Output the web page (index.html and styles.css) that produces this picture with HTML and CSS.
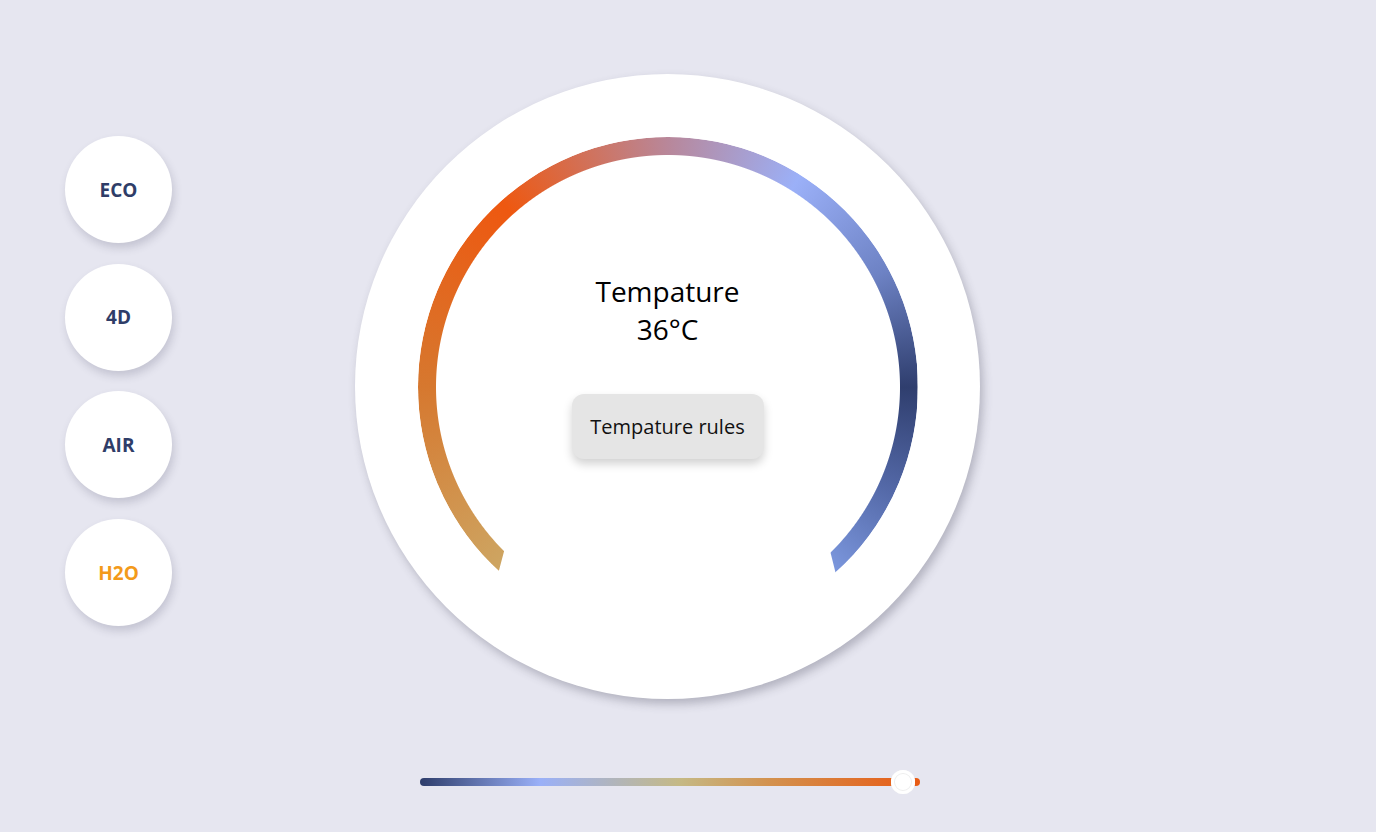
FILE: index.html
```html
<!DOCTYPE html>
<html lang="en">
<head>
    <meta charset="UTF-8">
    <meta name="viewport" content="width=device-width, initial-scale=1.0">
    <title>Thermostat</title>
    <link rel="stylesheet" href="styles.css">
</head>
<body>
    <div class="page">
        <div class="modes">
            <button class="mode">ECO</button>
            <button class="mode">4D</button>
            <button class="mode">AIR</button>
            <button class="mode active">H2O</button>
        </div>

        <div class="main">
            <div class="dial">
                <div class="arc"></div>
                <div class="readout">
                    <div class="label">Tempature<br>36°C</div>
                    <button class="rules">Tempature rules</button>
                </div>
            </div>

            <input class="slider" type="range" min="0" max="100" value="99">
        </div>
    </div>
</body>
</html>
```

FILE: styles.css
```css
body {
    margin: 0;
    background: #e6e6f0;
    font-family: "Open Sans", "Liberation Sans", sans-serif;
    color: #000;
}
.page {
    display: flex;
    height: 832px;
}
.modes {
    display: flex;
    flex-direction: column;
    gap: 20.7px;
    padding: 136px 0 0 65px;
}
.mode {
    width: 107px;
    height: 107px;
    border: none;
    border-radius: 50%;
    background: #fff;
    box-shadow: 2px 5px 9px rgba(60, 60, 90, 0.2);
    font-family: inherit;
    font-size: 19px;
    font-weight: 700;
    color: #2f3d68;
    cursor: pointer;
}
.mode.active {
    color: #f39a1b;
}
.main {
    display: flex;
    flex-direction: column;
    margin-left: 183px;
    padding-top: 74px;
}
.dial {
    width: 625px;
    height: 625px;
    border-radius: 50%;
    background: #fff;
    box-shadow: 3px 5px 10px rgba(60, 60, 80, 0.3);
    display: grid;
    place-items: center;
}
.arc,
.readout {
    grid-area: 1 / 1;
}
.arc {
    width: 500px;
    height: 500px;
    border-radius: 50%;
    background: conic-gradient(
        #b8879a 0deg,
        #9bb0f8 32deg,
        #6d82c4 62deg,
        #2f3e6e 90deg,
        #5469a8 115deg,
        #7f9be2 140deg,
        #cda865 220deg,
        #d6782f 270deg,
        #ee5810 318deg,
        #b8879a 360deg
    );
    -webkit-mask: radial-gradient(circle, transparent 231.5px, #000 232.5px);
    mask: radial-gradient(circle, transparent 231.5px, #000 232.5px);
    clip-path: polygon(0 0, 500px 0, 500px 500px, 434px 500px, 399px 360px, 101px 360px, 64px 500px, 0 500px);
}
.readout {
    align-self: start;
    margin-top: 198px;
    display: flex;
    flex-direction: column;
    align-items: center;
}
.label {
    font-size: 28px;
    line-height: 38px;
    text-align: center;
}
.rules {
    margin-top: 46px;
    width: 192px;
    height: 65px;
    border: none;
    border-radius: 12px;
    background: #e5e5e5;
    box-shadow: 0 5px 10px rgba(0, 0, 0, 0.18);
    font-family: inherit;
    font-size: 20px;
    color: #111;
    cursor: pointer;
}
.slider {
    -webkit-appearance: none;
    appearance: none;
    width: 500px;
    height: 24px;
    margin: 71px 0 0 65px;
    padding: 0;
    background: transparent;
}
.slider::-webkit-slider-runnable-track {
    height: 8px;
    border-radius: 4px;
    background: linear-gradient(to right, #2e3d6b 0%, #9ab0f8 24%, #c5b985 52%, #d3914e 70%, #e85a14 100%);
}
.slider::-webkit-slider-thumb {
    -webkit-appearance: none;
    width: 24px;
    height: 24px;
    margin-top: -8px;
    border-radius: 50%;
    background: #fff;
    box-shadow: inset 0 0 0 3px #fff, inset 0 0 0 4px #eee;
}
```
